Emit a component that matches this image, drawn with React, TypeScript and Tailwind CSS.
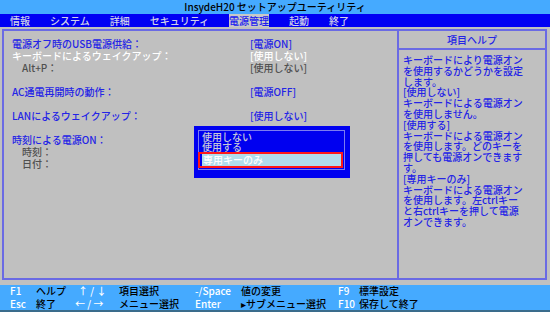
const font = { fontFamily: '"Noto Sans CJK JP", "Noto Sans", sans-serif' };

type Row = { label?: string; value?: string; tone?: "blue" | "white" | "gray"; indent?: boolean };

const rows: Row[] = [
  { label: "電源オフ時のUSB電源供給：", value: "[電源ON]", tone: "blue" },
  { label: "キーボードによるウェイクアップ：", value: "[使用しない]", tone: "white" },
  { label: "Alt+P：", value: "[使用しない]", tone: "gray", indent: true },
  {},
  { label: "AC通電再開時の動作：", value: "[電源OFF]", tone: "blue" },
  {},
  { label: "LANによるウェイクアップ：", value: "[使用しない]", tone: "blue" },
  {},
  { label: "時刻による電源ON：", tone: "blue" },
  { label: "時刻：", tone: "gray", indent: true },
  { label: "日付：", tone: "gray", indent: true },
];

const toneClass = {
  blue: "text-[#2424e6]",
  white: "text-white",
  gray: "text-[#505050]",
};

const help = [
  "キーボードにより電源オン",
  "を使用するかどうかを設定",
  "します。",
  "[使用しない]",
  "キーボードによる電源オン",
  "を使用しません。",
  "[使用する]",
  "キーボードによる電源オン",
  "を使用します。どのキーを",
  "押しても電源オンできます",
  "す。",
  "[専用キーのみ]",
  "キーボードによる電源オン",
  "を使用します。左ctrlキー",
  "と右ctrlキーを押して電源",
  "オンできます。",
];

const menu = ["情報", "システム", "詳細", "セキュリティ", "電源管理", "起動", "終了"];

export default function App() {
  return (
    <div className="flex h-[312px] w-[550px] flex-col overflow-hidden bg-[#c0c0c0] text-[10px] font-medium" style={font}>
      {/* タイトル */}
      <div className="flex h-[14px] items-center justify-center bg-[#45aaff] leading-[14px] text-black">
        InsydeH20 セットアップユーティリティ
      </div>

      {/* メニュー */}
      <div className="flex h-[13px] items-center gap-[20px] bg-[#0000f4] pl-[10px] leading-[13px] text-[#d0d0e8]">
        {menu.map((m) => (
          <span key={m} className={m === "電源管理" ? "bg-[#c8c8c8] text-[#1a1af0]" : ""}>
            {m}
          </span>
        ))}
      </div>

      {/* 本文 */}
      <div className="flex-1 pb-[5px] pl-[2px] pr-[3px] pt-[2px]">
        <div className="flex h-full border-2 border-[#6a6ae4]">
          {/* 左: 設定項目 */}
          <div className="relative flex-1 pl-[8px] pt-[7px]">
            {rows.map((r, i) => (
              <div key={i} className={`grid h-[12px] grid-cols-[238px_1fr] leading-[12px] ${r.tone ? toneClass[r.tone] : ""}`}>
                <span className={r.indent ? "pl-[10px]" : ""}>{r.label}</span>
                <span>{r.value}</span>
              </div>
            ))}

            {/* ポップアップ */}
            <div className="absolute left-[190px] top-[95px] h-[52px] w-[156px] bg-[#0000f0] pb-[8px] pl-[4px] pr-[5px] pt-[4px]">
              <div className="flex h-full flex-col border border-[#7c7cf0] text-[#c8c8d8]">
                <div className="mt-[1px] pl-[3px] leading-[10px]">使用しない</div>
                <div className="pl-[3px] leading-[10px]">使用する</div>
                <div className="-ml-[1px] h-[16px] w-[145px] border-2 border-[#ff1818]">
                  <div className="ml-[2px] h-full bg-[#b0dcec] pl-[1px] leading-[12px] text-white">専用キーのみ</div>
                </div>
              </div>
            </div>
          </div>

          {/* 右: ヘルプ */}
          <div className="flex w-[148px] flex-col border-l-2 border-[#6a6ae4]">
            <div className="flex h-[19px] items-center justify-center border-b-2 border-[#6a6ae4] text-[#2424e6]">
              項目ヘルプ
            </div>
            <div className="pl-[4px] pt-[5px] leading-[10.8px] text-[#2424e6]">
              {help.map((h, i) => (
                <div key={i}>{h}</div>
              ))}
            </div>
          </div>
        </div>
      </div>

      {/* フッター */}
      <div className="bg-[#45aaff]">
        <div className="grid grid-cols-[26px_40px_43px_76px_46px_97px_21px_1fr] pl-[10px] leading-[12.5px] text-black">
          <span className="text-white">F1</span>
          <span>ヘルプ</span>
          <span className="pl-[2px] text-white">↑ / ↓</span>
          <span>項目選択</span>
          <span className="text-white">-/Space</span>
          <span>値の変更</span>
          <span className="text-white">F9</span>
          <span>標準設定</span>

          <span className="text-white">Esc</span>
          <span>終了</span>
          <span className="-ml-[1px] text-white">← / →</span>
          <span>メニュー選択</span>
          <span className="text-white">Enter</span>
          <span>▸サブメニュー選択</span>
          <span className="text-white">F10</span>
          <span>保存して終了</span>
        </div>
        <div className="h-[2px] bg-[#3a6c8c]" />
      </div>
    </div>
  );
}
